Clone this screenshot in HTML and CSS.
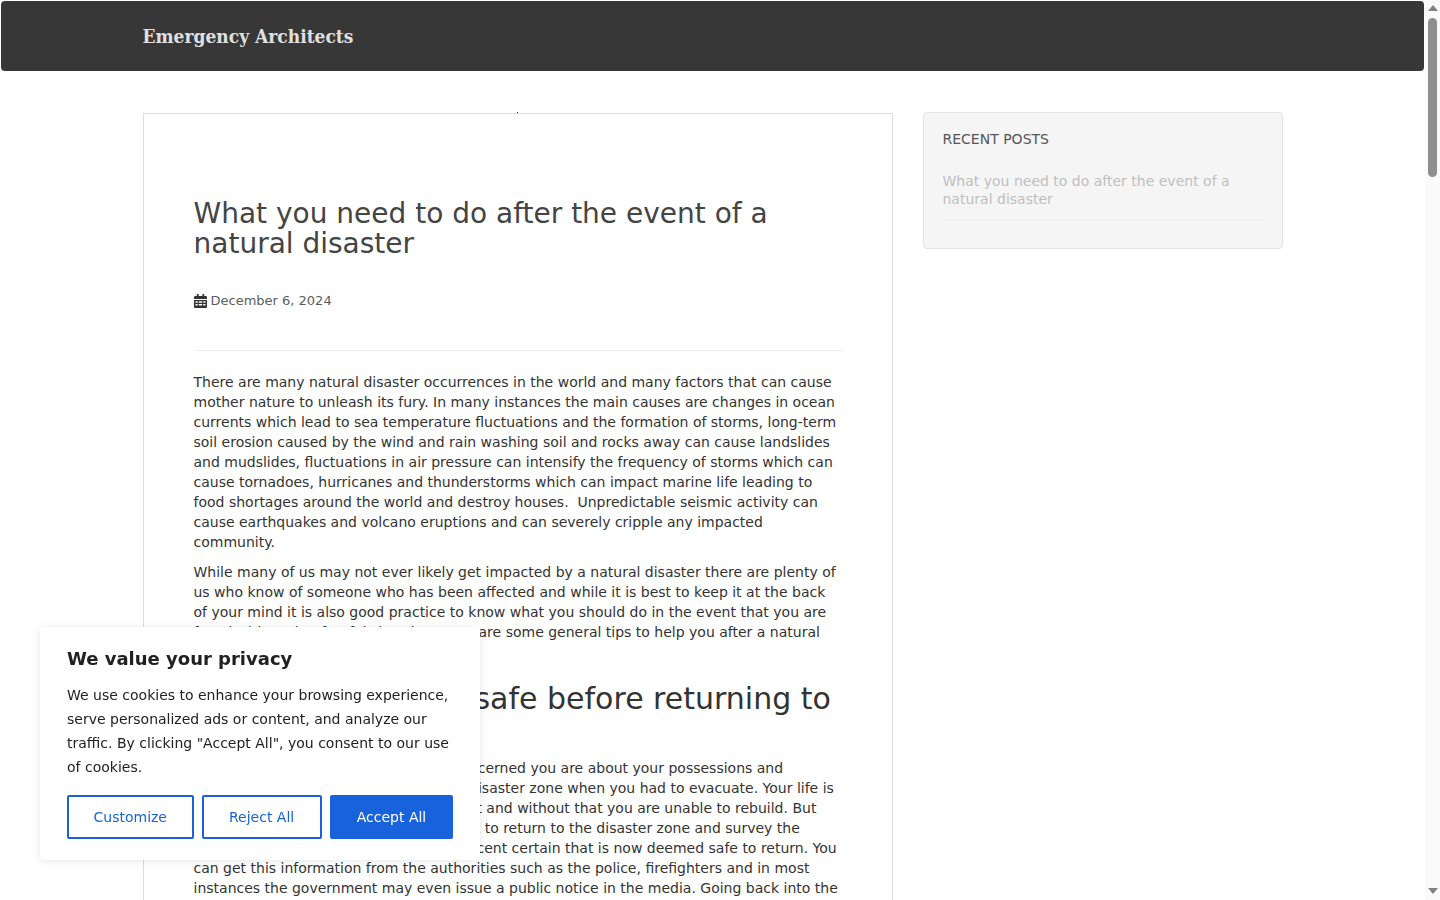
FILE: index.html
```html
<!DOCTYPE html>
<html lang="en">
<head>
<meta charset="utf-8">
<title>What you need to do after the event of a natural disaster – Emergency Architects</title>
<link rel="stylesheet" href="styles.css">
</head>
<body>
<div class="page">
<header class="navbar">
  <div class="navbar-inner"><a class="brand" href="#">Emergency Architects</a></div>
</header>
<div class="layout">
  <main class="article">
    <span class="tick"></span>
    <h1 class="title">What you need to do after the event of a natural disaster</h1>
    <div class="meta">
      <svg class="cal" viewBox="0 0 13 14" aria-hidden="true"><path d="M2.800 0h1.800v2H8.400V0h1.800v2h1.500c.7 0 1.300.6 1.300 1.300V5H0V3.300C0 2.600.6 2 1.300 2h1.500zM0 6h13v6.700c0 .7-.6 1.300-1.300 1.300H1.300C.6 14 0 13.400 0 12.700zm1.500 1.200v1.500h2.200V7.200zm3.300 0v1.500h3.400V7.200zm4.500 0v1.500h2.200V7.200zm-7.800 2.700v1.500h2.200V9.900zm3.300 0v1.500h3.400V9.900zm4.500 0v1.500h2.200V9.900z"/></svg>
      <span>December 6, 2024</span>
    </div>
    <hr class="rule">
    <p>There are many natural disaster occurrences in the world and many factors that can cause mother nature to unleash its fury. In many instances the main causes are changes in ocean currents which lead to sea temperature fluctuations and the formation of storms, long-term soil erosion caused by the wind and rain washing soil and rocks away can cause landslides and mudslides, fluctuations in air pressure can intensify the frequency of storms which can cause tornadoes, hurricanes and thunderstorms which can impact marine life leading to food shortages around the world and destroy houses.&nbsp; Unpredictable seismic activity can cause earthquakes and volcano eruptions and can severely cripple any impacted community.</p>
    <p>While many of us may not ever likely get impacted by a natural disaster there are plenty of us who know of someone who has been affected and while it is best to keep it at the back of your mind it is also good practice to know what you should do in the event that you are faced with such a fearful situation. Here are some general tips to help you after a natural disaster.</p>
    <h2>Make certain all is safe before returning to your home</h2>
    <p>It doesn’t matter how scared or how concerned you are about your possessions and property that you’ve left behind in this disaster zone when you had to evacuate. Your life is the most important thing of all to protect and without that you are unable to rebuild. But when you feel it is now the best moment to return to the disaster zone and survey the damage, make sure to be a hundred percent certain that is now deemed safe to return. You can get this information from the authorities such as the police, firefighters and in most instances the government may even issue a public notice in the media. Going back into the</p>
  </main>
  <aside class="sidebar">
    <h3>Recent Posts</h3>
    <a class="recent" href="#">What you need to do after the event of a natural disaster</a>
  </aside>
</div>
</div>
<section class="consent">
  <h4>We value your privacy</h4>
  <p>We use cookies to enhance your browsing experience, serve personalized ads or content, and analyze our traffic. By clicking "Accept All", you consent to our use of cookies.</p>
  <div class="consent-actions">
    <button class="btn btn-customize">Customize</button>
    <button class="btn btn-reject">Reject All</button>
    <button class="btn btn-accept">Accept All</button>
  </div>
</section>
<div class="scrollbar" aria-hidden="true">
  <span class="arrow arrow-up"></span>
  <span class="thumb"></span>
  <span class="arrow arrow-down"></span>
</div>
</body>
</html>
```
FILE: styles.css
```css
* { box-sizing: border-box; }
body {
  margin: 0;
  background: #fff;
  color: #333;
  font-family: "DejaVu Sans", sans-serif;
  font-size: 14px;
  line-height: 20px;
}
.page { width: 1425px; }
.navbar {
  height: 72px;
  background: #373737;
  background-clip: padding-box;
  border: 1px solid transparent;
  border-radius: 5px;
  margin-bottom: 41px;
}
.navbar-inner {
  width: 1170px;
  margin: 0 auto;
  padding: 0 15px;
}
.brand {
  display: block;
  color: #e0e0e0;
  font-family: "DejaVu Serif", serif;
  font-stretch: condensed;
  font-size: 19px;
  font-weight: 700;
  line-height: 70px;
  text-decoration: none;
}
.layout {
  display: flex;
  align-items: flex-start;
  width: 1140px;
  margin: 0 auto;
  gap: 30px;
}
.article {
  position: relative;
  width: 750px;
  min-height: 4700px;
  border: 1px solid #ddd;
  padding: 85px 50px 50px;
}
.tick {
  position: absolute;
  top: -2px;
  left: 373px;
  width: 1px;
  height: 1px;
  background: #333;
}
.title {
  margin: 0;
  font-size: 28px;
  font-weight: 400;
  line-height: 30px;
  color: #444;
}
.meta {
  display: flex;
  align-items: center;
  gap: 4px;
  margin-top: 32px;
  font-size: 13px;
  line-height: 20px;
  color: #5c5c5c;
}
.cal { width: 13px; height: 14px; margin-top: -1px; fill: #333; }
.rule {
  margin: 39px 0 21px;
  border: 0;
  border-top: 1px solid #eee;
}
.article p { margin: 0 0 10px; }
.article h2 {
  margin: 20px 0 10px;
  font-size: 30px;
  font-weight: 400;
  line-height: 33px;
  color: #333;
}
.sidebar {
  width: 360px;
  height: 137px;
  margin-top: -1px;
  padding: 17px 19px;
  background: #f5f5f5;
  border: 1px solid #e3e3e3;
  border-radius: 4px;
}
.sidebar h3 {
  margin: 0 0 24px;
  font-size: 14px;
  font-weight: 400;
  line-height: 18px;
  text-transform: uppercase;
  color: #555;
}
.recent {
  display: block;
  padding-bottom: 12px;
  border-bottom: 1px solid #f1f1f1;
  color: #bfbfbf;
  line-height: 18px;
  text-decoration: none;
}
.consent {
  position: fixed;
  left: 40px;
  bottom: 40px;
  width: 440px;
  padding: 20px 27px 21px;
  background: #fff;
  border-radius: 4px;
  box-shadow: 0 1px 8px rgba(0,0,0,.1);
  color: #212121;
}
.consent h4 {
  margin: 0 0 12px;
  font-size: 18px;
  font-weight: 700;
  line-height: 24px;
}
.consent p {
  margin: 0 0 16px;
  font-size: 14px;
  line-height: 24px;
}
.consent-actions { display: flex; gap: 8px; }
.btn {
  flex: none;
  height: 44px;
  padding: 0 25px;
  border: 2px solid #1863dc;
  border-radius: 2px;
  background: #fff;
  color: #1863dc;
  font-family: "DejaVu Sans", sans-serif;
  font-size: 14px;
  white-space: nowrap;
}
.btn-customize { padding: 0 24.5px; }
.btn-reject { padding: 0 25.5px; }
.btn-accept { background: #1863dc; color: #fff; }
.scrollbar {
  position: fixed;
  top: 0;
  right: 0;
  bottom: 0;
  width: 15px;
  display: flex;
  flex-direction: column;
  align-items: center;
  background: #fafafa;
}
.arrow {
  width: 0;
  height: 0;
  border-left: 5px solid transparent;
  border-right: 5px solid transparent;
}
.arrow-up { margin-top: 5px; border-bottom: 6px solid #808080; }
.arrow-down { margin-top: auto; margin-bottom: 6px; border-top: 6px solid #808080; }
.thumb {
  width: 9px;
  height: 159px;
  margin-top: 7px;
  border-radius: 5px;
  background: #8f8f8f;
}
```
